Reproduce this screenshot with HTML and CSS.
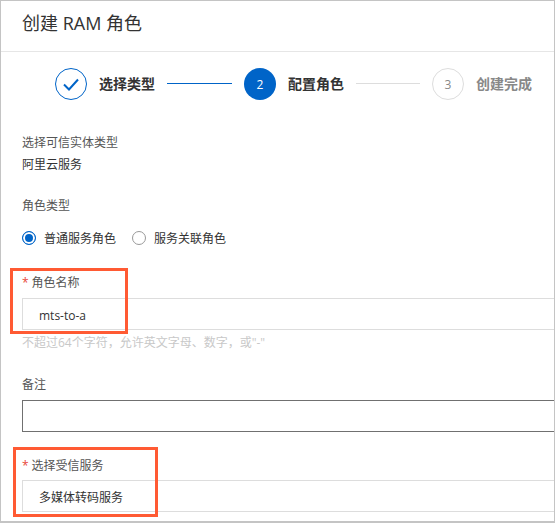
FILE: index.html
```html
<!DOCTYPE html>
<html lang="zh-CN">
<head>
    <meta charset="UTF-8">
    <title>创建 RAM 角色</title>
    <link rel="stylesheet" href="styles.css">
</head>
<body>
    <div class="panel">
        <div class="panel-title">创建 RAM 角色</div>

        <div class="steps">
            <div class="step-circle done">
                <svg width="16" height="13" viewBox="0 0 16 13"><path d="M1 6.5 L6 11.5 L15 1.5" fill="none" stroke="#0064c8" stroke-width="2"/></svg>
            </div>
            <span class="step-text">选择类型</span>
            <div class="step-line active"></div>
            <div class="step-circle current">2</div>
            <span class="step-text">配置角色</span>
            <div class="step-line"></div>
            <div class="step-circle todo">3</div>
            <span class="step-text muted">创建完成</span>
        </div>

        <div class="form">
            <div class="label">选择可信实体类型</div>
            <div class="value">阿里云服务</div>

            <div class="label type-label">角色类型</div>
            <div class="radios">
                <span class="radio checked"></span>
                <span class="radio-text">普通服务角色</span>
                <span class="radio"></span>
                <span class="radio-text">服务关联角色</span>
            </div>

            <div class="label name-label"><span class="required">*</span>角色名称</div>
            <div class="input">mts-to-a</div>
            <div class="hint">不超过64个字符，允许英文字母、数字，或"-"</div>

            <div class="label note-label">备注</div>
            <div class="input dark"></div>

            <div class="label service-label"><span class="required">*</span>选择受信服务</div>
            <div class="input service-input">多媒体转码服务</div>
        </div>

        <!-- red annotation boxes -->
        <div class="mark mark-name"></div>
        <div class="mark mark-service"></div>
    </div>
</body>
</html>
```

FILE: styles.css
```css
html, body {
    margin: 0;
    padding: 0;
    background: #fff;
}

body {
    width: 555px;
    height: 523px;
    overflow: hidden;
    font-family: "Open Sans", "Noto Sans CJK SC", sans-serif;
    font-size: 12px;
    color: #333;
}

.panel {
    position: relative;
    box-sizing: border-box;
    width: 555px;
    height: 523px;
    border: 1px solid #c4c4c4;
    border-bottom-width: 2px;
    overflow: hidden;
}

.panel-title {
    box-sizing: border-box;
    height: 51px;
    padding: 10px 0 0 21px;
    font-size: 18px;
    line-height: 25px;
    border-bottom: 1px solid #e6e6e6;
}

.steps {
    display: flex;
    align-items: center;
    height: 32px;
    margin: 16px 0 0 54px;
}

.step-circle {
    box-sizing: border-box;
    display: flex;
    justify-content: center;
    align-items: center;
    width: 32px;
    height: 32px;
    border-radius: 50%;
    font-size: 12px;
}

.step-circle.done {
    border: 1px solid #0064c8;
}

.step-circle.current {
    background: #0064c8;
    color: #fff;
}

.step-circle.todo {
    border: 1px solid #ddd;
    color: #888;
}

.step-text {
    width: 56px;
    margin-left: 12px;
    font-size: 14px;
    line-height: 20px;
    font-weight: bold;
    white-space: nowrap;
}

.step-text.muted {
    color: #888;
}

.step-line {
    width: 64px;
    height: 1px;
    margin: 0 12px 2px;
    background: #ddd;
}

.step-line.active {
    width: 65px;
    background: #0064c8;
}

.form {
    padding: 34px 0 0 21px;
}

.label {
    line-height: 18px;
    color: #555;
}

.value {
    margin-top: 4px;
    line-height: 18px;
    color: #333;
}

.type-label {
    margin-top: 23px;
}

.radios {
    display: flex;
    align-items: center;
    height: 18px;
    margin-top: 14px;
}

.radio {
    box-sizing: border-box;
    width: 14px;
    height: 14px;
    border: 1px solid #999;
    border-radius: 50%;
}

.radio.checked {
    border-color: #0064c8;
    background: #0064c8;
    box-shadow: inset 0 0 0 2px #fff;
}

.radio-text {
    width: 72px;
    margin: 0 16px 0 8px;
    color: #333;
}

.name-label {
    margin-top: 27px;
}

.required {
    margin-right: 3px;
    color: #e84738;
}

.input {
    box-sizing: border-box;
    width: 540px;
    height: 32px;
    margin-top: 6px;
    padding-left: 16px;
    border: 1px solid #ddd;
    line-height: 33px;
}

.input.dark {
    border-color: #707070;
}

.service-input {
    margin-top: 5px;
}

.hint {
    margin-top: 4px;
    line-height: 18px;
    color: #c8c8c8;
}

.note-label {
    margin-top: 24px;
}

.service-label {
    margin-top: 25px;
}

.mark {
    position: absolute;
    box-sizing: border-box;
    border: 3px solid #ff5a33;
}

.mark-name {
    left: 9px;
    top: 267px;
    width: 118px;
    height: 66px;
}

.mark-service {
    left: 12px;
    top: 446px;
    width: 145px;
    height: 70px;
}
```
